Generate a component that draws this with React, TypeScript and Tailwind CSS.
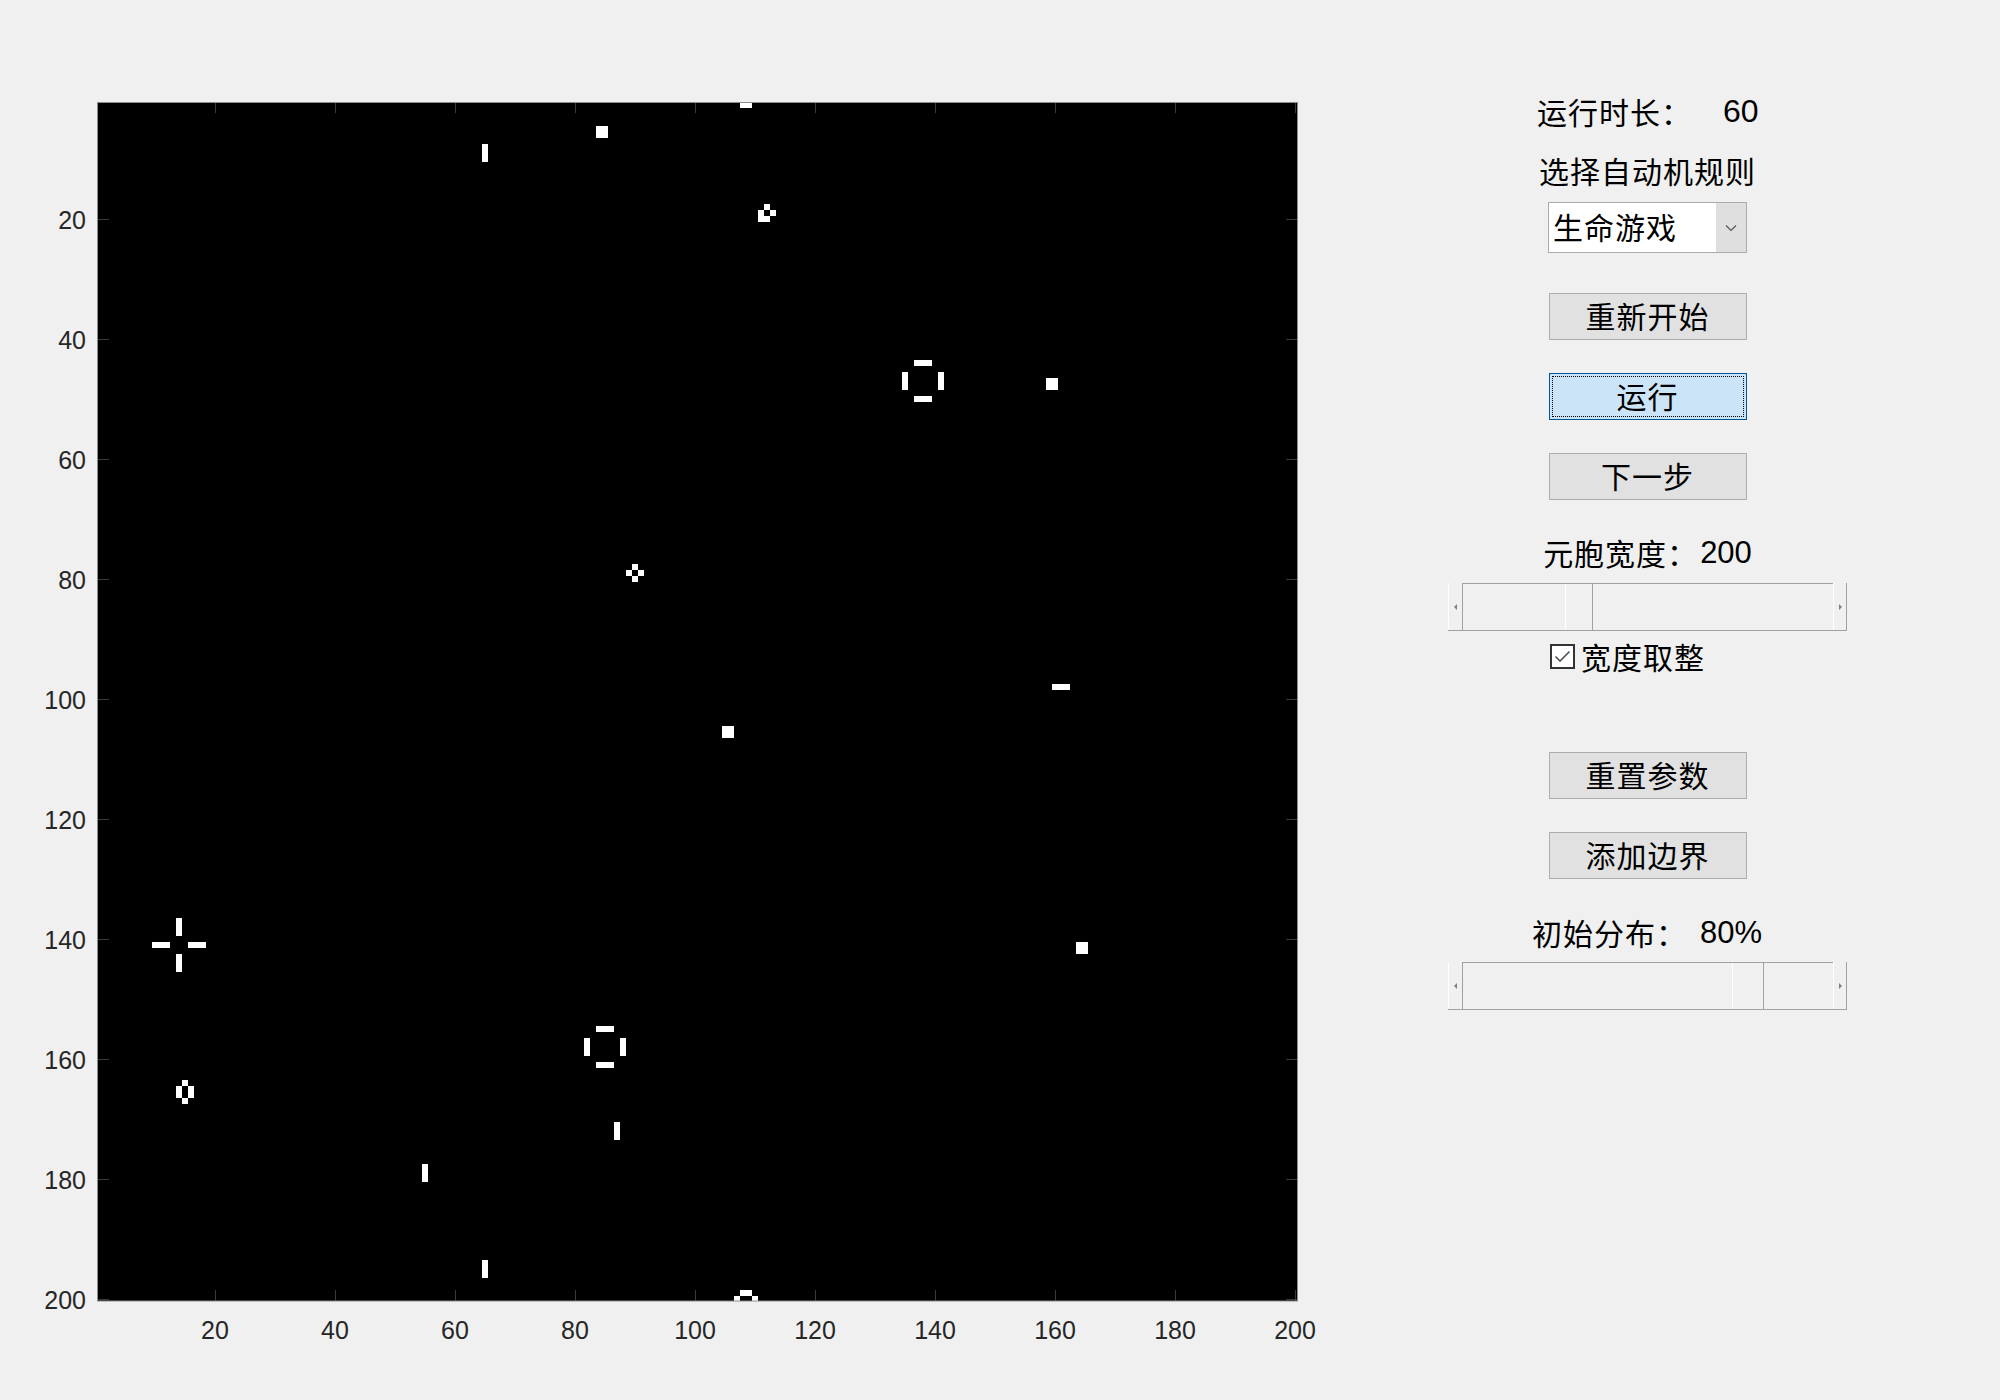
import React from "react";

// live cells [row, col], 0-based on the 200x200 board
const blocks: [number, number][] = [
  [4, 83],
  [46, 158],
  [104, 104],
  [140, 163],
];

const cells: [number, number][] = [
  // beehive wrapped over the top/bottom edge
  [0, 107], [0, 108], [198, 107], [198, 108], [199, 106], [199, 109],
  // blinkers
  [7, 64], [8, 64], [9, 64],
  [97, 159], [97, 160], [97, 161],
  [170, 86], [171, 86], [172, 86],
  [177, 54], [178, 54], [179, 54],
  [193, 64], [194, 64], [195, 64],
  // boat
  [17, 111], [18, 110], [18, 112], [19, 110], [19, 111],
  // tub
  [77, 89], [78, 88], [78, 90], [79, 89],
  // beehive
  [163, 14], [164, 13], [164, 15], [165, 13], [165, 15], [166, 14],
];

// traffic light, ring phase (top-left of 7x7 box)
const ring = (r: number, c: number): [number, number][] => [
  [r, c + 2], [r, c + 3], [r, c + 4],
  [r + 2, c], [r + 3, c], [r + 4, c],
  [r + 2, c + 6], [r + 3, c + 6], [r + 4, c + 6],
  [r + 6, c + 2], [r + 6, c + 3], [r + 6, c + 4],
];

// traffic light, cross phase (center cell)
const cross = (r: number, c: number): [number, number][] => [
  [r - 4, c], [r - 3, c], [r - 2, c],
  [r + 2, c], [r + 3, c], [r + 4, c],
  [r, c - 4], [r, c - 3], [r, c - 2],
  [r, c + 2], [r, c + 3], [r, c + 4],
];

const allCells: [number, number][] = [
  ...cells,
  ...blocks.flatMap(([r, c]) => [
    [r, c],
    [r, c + 1],
    [r + 1, c],
    [r + 1, c + 1],
  ] as [number, number][]),
  ...ring(43, 134),
  ...ring(154, 81),
  ...cross(140, 13),
];

const ticks = [20, 40, 60, 80, 100, 120, 140, 160, 180, 200];

const cjk = "font-['Noto_Sans_CJK_SC',sans-serif]";
const num = "font-['Liberation_Sans',Arial,sans-serif]";

const Board = () => (
  <svg width={1448} height={1400} className="block shrink-0">
    <rect x={97} y={102} width={1201} height={1199} fill="#000" />
    <g shapeRendering="crispEdges" fill="#fff">
      {allCells.map(([r, c], i) => (
        <rect key={i} x={98 + c * 6} y={102 + r * 6} width={6} height={Math.min(6, 1301 - (102 + r * 6))} />
      ))}
    </g>
    <g stroke="#3a3a3a" strokeWidth={1} shapeRendering="crispEdges">
      {ticks.map((v) => (
        <g key={v}>
          <line x1={95 + 6 * v + 0.5} y1={1301} x2={95 + 6 * v + 0.5} y2={1290} />
          <line x1={95 + 6 * v + 0.5} y1={102} x2={95 + 6 * v + 0.5} y2={113} />
          <line x1={97} y1={99 + 6 * v + 0.5} x2={109} y2={99 + 6 * v + 0.5} />
          <line x1={1298} y1={99 + 6 * v + 0.5} x2={1286} y2={99 + 6 * v + 0.5} />
        </g>
      ))}
    </g>
    <rect x={97.5} y={102.5} width={1200} height={1198.5} fill="none" stroke="#8c8c8c" strokeWidth={1} />
    <g fill="#262626" fontSize={25} fontFamily="'Liberation Sans', Arial, sans-serif">
      {ticks.map((v) => (
        <text key={"x" + v} x={95 + 6 * v} y={1339} textAnchor="middle">
          {v}
        </text>
      ))}
      {ticks.map((v) => (
        <text key={"y" + v} x={86} y={99 + 6 * v + 10} textAnchor="end">
          {v}
        </text>
      ))}
    </g>
  </svg>
);

const Button = ({ label, focused = false }: { label: string; focused?: boolean }) => (
  <div
    className={
      focused
        ? `mx-auto flex h-[47px] w-[198px] items-center justify-center border border-[#005499] bg-[#cce4f7] pb-[4px] outline outline-1 outline-dotted outline-black outline-offset-[-4px] text-[30px] leading-none text-black ${cjk}`
        : `mx-auto flex h-[47px] w-[198px] items-center justify-center border border-[#adadad] bg-[#e1e1e1] pb-[4px] text-[30px] leading-none text-black ${cjk}`
    }
  >
    <span className="tracking-[1px]">{label}</span>
  </div>
);

const Slider = ({ offset, thumb }: { offset: number; thumb: number }) => (
  <div className="flex h-[48px] w-[399px] border-b border-[#a0a0a0]">
    <div className="flex w-[15px] items-center justify-center border-l border-r border-l-white border-r-[#a0a0a0]">
      <div className="h-0 w-0 border-y-[3px] border-r-[3px] border-y-transparent border-r-[#808080]" />
    </div>
    <div className="flex flex-1 border-t border-[#a0a0a0]">
      <div style={{ width: offset }} />
      <div
        className="border-l border-r border-l-white border-r-[#a0a0a0] bg-[#f0f0f0]"
        style={{ width: thumb }}
      />
      <div className="flex-1" />
    </div>
    <div className="flex w-[14px] items-center justify-center border-l border-r border-l-white border-r-[#a0a0a0]">
      <div className="h-0 w-0 border-y-[3px] border-l-[3px] border-y-transparent border-l-[#808080]" />
    </div>
  </div>
);

const Panel = () => (
  <div className="flex w-[399px] flex-col pt-[93px] text-black">
    {/* run length */}
    <div className="flex h-[36px] items-center pl-[89px]">
      <span className={`text-[30px] leading-none tracking-[1px] ${cjk}`}>运行时长：</span>
      <span className={`ml-[31px] text-[32px] leading-none ${num}`}>60</span>
    </div>

    <div className={`mt-[23px] flex h-[36px] items-center justify-center text-[30px] leading-none tracking-[1px] ${cjk}`}>
      选择自动机规则
    </div>

    {/* rule select */}
    <div className="mx-auto mt-[14px] flex h-[51px] w-[199px] border border-[#acacac] bg-white">
      <div className={`flex flex-1 items-center pb-[4px] pl-[4px] text-[30px] leading-none tracking-[1px] ${cjk}`}>生命游戏</div>
      <div className="flex w-[30px] items-center justify-center bg-[#dfdfdf]">
        <svg width="12" height="8" viewBox="0 0 12 8">
          <polyline points="1,1.5 6,6.5 11,1.5" fill="none" stroke="#555" strokeWidth="1.2" />
        </svg>
      </div>
    </div>

    <div className="mt-[40px]">
      <Button label="重新开始" />
    </div>
    <div className="mt-[33px]">
      <Button label="运行" focused />
    </div>
    <div className="mt-[33px]">
      <Button label="下一步" />
    </div>

    {/* cell width */}
    <div className="mt-[34px] flex h-[36px] items-center justify-center">
      <span className={`text-[30px] leading-none tracking-[1px] ${cjk}`}>元胞宽度：</span>
      <span className={`ml-[2px] text-[31px] leading-none ${num}`}>200</span>
    </div>
    <div className="mt-[13px]">
      <Slider offset={102} thumb={28} />
    </div>

    <div className="mt-[7px] flex h-[36px] items-center pl-[102px]">
      <div className="flex h-[25px] w-[25px] items-center justify-center border-2 border-[#333] bg-white">
        <svg width="17" height="13" viewBox="0 0 17 13">
          <polyline points="1.5,6.5 6,11 15.5,1.5" fill="none" stroke="#555" strokeWidth="1.6" />
        </svg>
      </div>
      <span className={`ml-[6px] text-[30px] leading-none tracking-[1px] ${cjk}`}>宽度取整</span>
    </div>

    <div className="mt-[78px]">
      <Button label="重置参数" />
    </div>
    <div className="mt-[33px]">
      <Button label="添加边界" />
    </div>

    {/* initial density */}
    <div className="mt-[35px] flex h-[36px] items-center pl-[84px]">
      <span className={`text-[30px] leading-none tracking-[1px] ${cjk}`}>初始分布：</span>
      <span className={`ml-[13px] text-[31px] leading-none ${num}`}>80%</span>
    </div>
    <div className="mt-[12px]">
      <Slider offset={269} thumb={32} />
    </div>
  </div>
);

export default function App() {
  return (
    <div className="flex h-[1400px] w-[2000px] overflow-hidden bg-[#f0f0f0]">
      <Board />
      <Panel />
    </div>
  );
}
